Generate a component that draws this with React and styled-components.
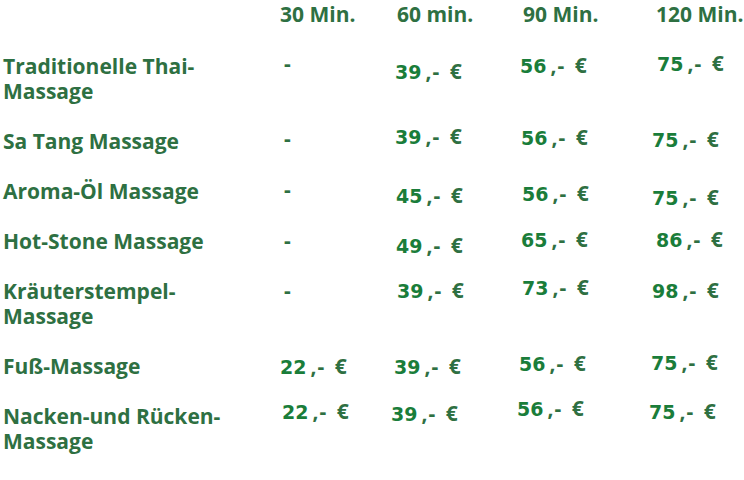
import React from "react";
import styled, { createGlobalStyle } from "styled-components";

const GlobalStyle = createGlobalStyle`
  html, body {
    margin: 0;
    padding: 0;
    background: #ffffff;
  }
  body {
    font-family: "Open Sans", "Lato", sans-serif;
  }
`;

const headers = [
  { text: "30 Min.", dx: 2 },
  { text: "60 min.", dx: 6 },
  { text: "90 Min.", dx: 7 },
  { text: "120 Min.", dx: 8 },
];

// each price: [amount, dx, dy] - amount null means a dash
const rows = [
  {
    name: ["Traditionelle Thai-", "Massage"],
    prices: [[null, 6, -3], ["39", 4, 5], ["56", 4, -1], ["75", 9, -3]],
  },
  {
    name: ["Sa Tang Massage"],
    prices: [[null, 6, -3], ["39", 4, -5], ["56", 5, -4], ["75", 4, -2]],
  },
  {
    name: ["Aroma-Öl Massage"],
    prices: [[null, 6, -2], ["45", 5, 4], ["56", 6, 2], ["75", 4, 6]],
  },
  {
    name: ["Hot-Stone Massage"],
    prices: [[null, 6, -1], ["49", 5, 4], ["65", 5, -2], ["86", 8, -2]],
  },
  {
    name: ["Kräuterstempel-", "Massage"],
    prices: [[null, 6, -1], ["39", 6, -1], ["73", 6, -4], ["98", 4, -1]],
  },
  {
    name: ["Fuß-Massage"],
    prices: [["22", 2, 0], ["39", 3, 0], ["56", 3, -3], ["75", 3, -4]],
  },
  {
    name: ["Nacken-und Rücken-", "Massage"],
    prices: [["22", 4, -5], ["39", 0, -3], ["56", 1, -8], ["75", 1, -5]],
  },
];

export default function App() {
  return (
    <>
      <GlobalStyle />
      <PriceTable>
        <HeaderRow>
          <span />
          {headers.map((h, i) => (
            <ColHead key={i} $dx={h.dx}>
              {h.text}
            </ColHead>
          ))}
        </HeaderRow>
        {rows.map((r, i) => (
          <Row key={i} $lines={r.name.length}>
            <Treatment>
              {r.name.map((line, j) => (
                <div key={j}>{line}</div>
              ))}
            </Treatment>
            {r.prices.map(([amount, dx, dy], j) =>
              amount ? (
                <Price key={j} $dx={dx} $dy={dy}>
                  <Amount>{amount}</Amount>
                  <Suffix>,- €</Suffix>
                </Price>
              ) : (
                <Dash key={j} $dx={dx} $dy={dy}>
                  -
                </Dash>
              )
            )}
          </Row>
        ))}
      </PriceTable>
    </>
  );
}

const PriceTable = styled.div`
  width: 744px;
  padding: 2px 0 0 3px;
  box-sizing: border-box;
  color: #2e7042;
`;

const grid = `
  display: grid;
  grid-template-columns: 275px 113px 125px 132px 1fr;
  align-items: start;
`;

const HeaderRow = styled.div`
  ${grid}
  height: 52px;
`;

const ColHead = styled.div`
  margin-left: ${(p) => p.$dx}px;
  font-size: 21px;
  font-weight: 700;
  line-height: 25px;
  white-space: nowrap;
`;

const Row = styled.div`
  ${grid}
  grid-template-rows: ${(p) => p.$lines * 25}px;
  margin-bottom: 25px;
`;

const Treatment = styled.div`
  font-size: 21px;
  font-weight: 700;
  line-height: 25px;
  white-space: nowrap;
`;

const Price = styled.div`
  margin-left: ${(p) => p.$dx}px;
  margin-top: ${(p) => p.$dy}px;
  line-height: 25px;
  white-space: nowrap;
`;

const Amount = styled.span`
  font-family: "DejaVu Sans", "Verdana", sans-serif;
  font-size: 19px;
  font-weight: 700;
  color: #1a7d3a;
  margin-right: 4px;
`;

const Suffix = styled.span`
  font-size: 21px;
  font-weight: 700;
  letter-spacing: 1px;
  word-spacing: 3px;
`;

const Dash = styled.div`
  margin-left: ${(p) => p.$dx}px;
  margin-top: ${(p) => p.$dy}px;
  font-size: 21px;
  font-weight: 700;
  line-height: 25px;
`;
